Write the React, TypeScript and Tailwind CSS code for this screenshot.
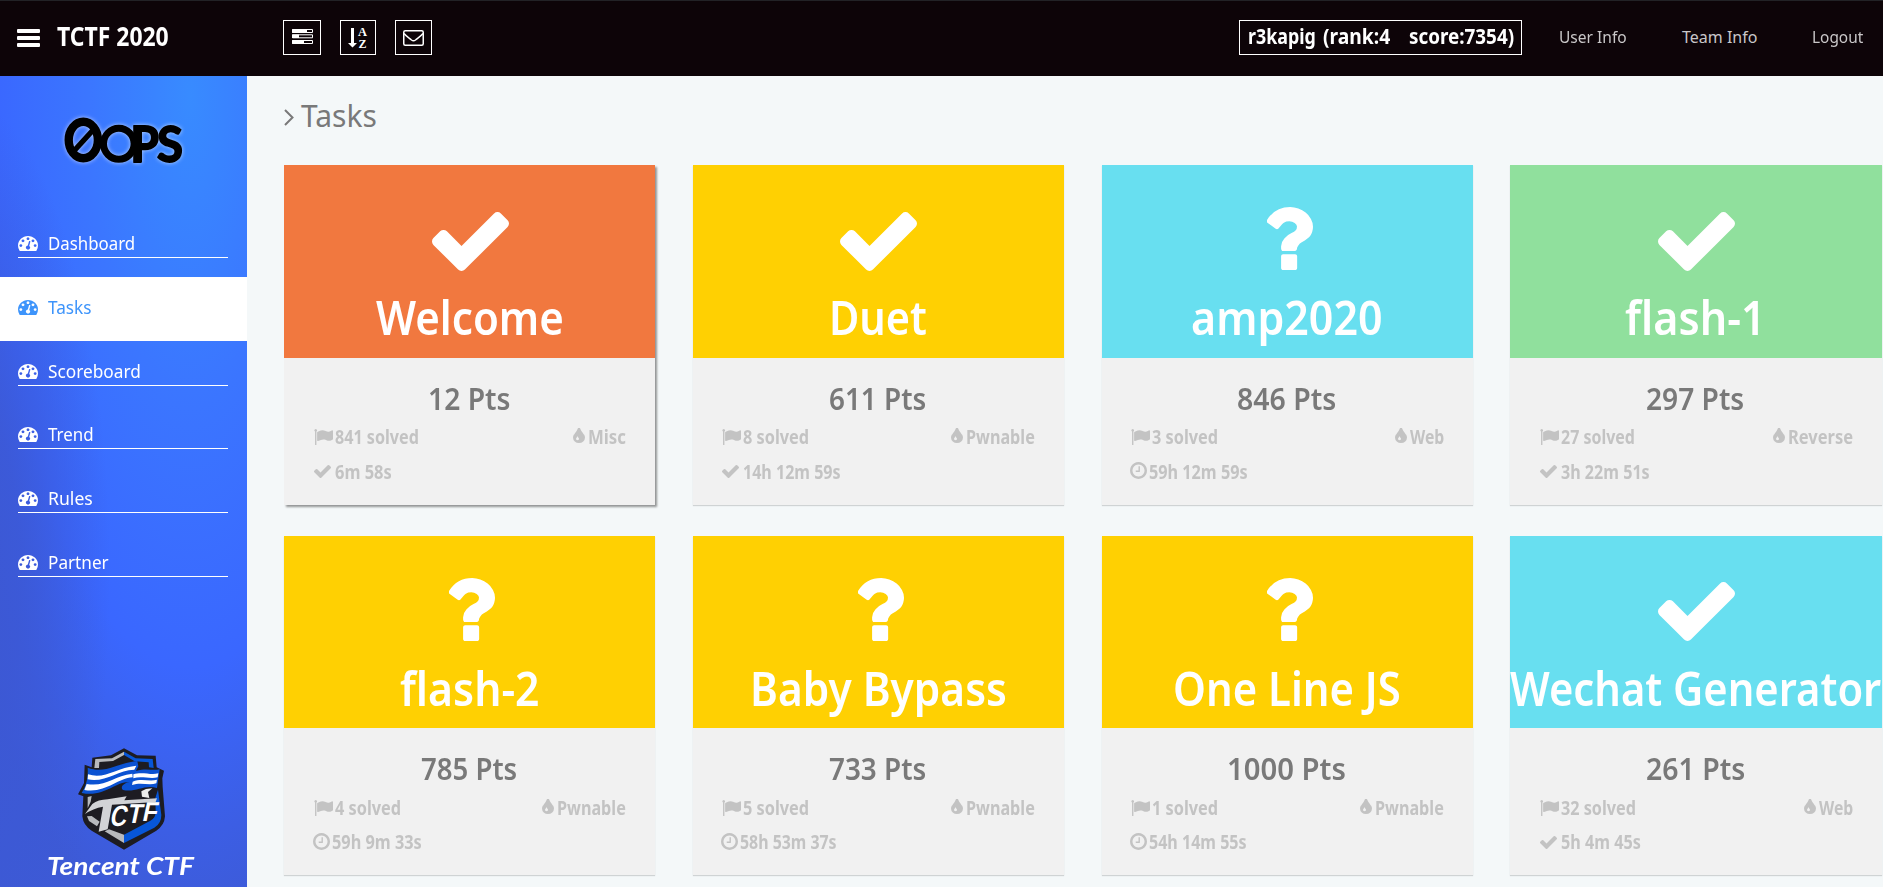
import { useLayoutEffect, useRef, useState } from "react";
import type { ReactNode } from "react";

/** Text set to a fixed width, condensed or widened horizontally as needed. */
function Fit({ w, className = "", children }: { w: number; className?: string; children: ReactNode }) {
  const ref = useRef<HTMLSpanElement>(null);
  const [scale, setScale] = useState(1);
  useLayoutEffect(() => {
    if (ref.current) setScale(w / ref.current.offsetWidth);
  }, [w]);
  return (
    <span className={`block shrink-0 ${className}`} style={{ width: w }}>
      <span ref={ref} className="inline-block origin-left whitespace-pre" style={{ transform: `scaleX(${scale})` }}>
        {children}
      </span>
    </span>
  );
}

function Icon({ d, className = "", box = "0 0 1792 1792" }: { d: string; className?: string; box?: string }) {
  return (
    <svg viewBox={box} fill="currentColor" preserveAspectRatio="none" className={`block shrink-0 ${className}`}>
      <path d={d} />
    </svg>
  );
}

const CHECK =
  "M1671 566q0 40-28 68l-724 724-136 136q-28 28-68 28t-68-28l-136-136-362-362q-28-28-28-68t28-68l136-136q28-28 68-28t68 28l294 295 656-657q28-28 68-28t68 28l136 136q28 28 28 68z";
const QUESTION =
  "M1088 1256v240q0 16-12 28t-28 12h-240q-16 0-28-12t-12-28v-240q0-16 12-28t28-12h240q16 0 28 12t12 28zm316-600q0 54-15.5 101t-35 76.5-55 59.5-57.5 43.5-61 35.5q-41 23-68.5 65t-27.5 67q0 17-12 32.5t-28 15.5h-240q-15 0-25.5-18.5t-10.5-37.5v-45q0-83 65-156.5t143-108.5q59-27 84-56t25-76q0-42-46.5-74t-107.5-32q-65 0-108 29-35 25-107 115-13 16-31 16-12 0-25-8l-164-125q-13-10-15.5-25t5.5-28q160-266 464-266 80 0 161 31t146 83 106 127.5 41 158.5z";
const TINT =
  "M896 1152q0-36-20-69-1-1-15.5-22.5t-25.5-38-25-44-21-50.5q-4-16-21-16t-21 16q-7 23-21 50.5t-25 44-25.5 38-15.5 22.5q-20 33-20 69 0 53 37.5 90.5t90.5 37.5 90.5-37.5 37.5-90.5zm512-128q0 212-150 362t-362 150-362-150-150-362q0-145 81-275 6-9 62.5-90.5t101-151 99.5-178 83-201.5q9-30 34-47t51-17 51.5 17 33.5 47q28 93 83 201.5t99.5 178 101 151 62.5 90.5q81 127 81 275z";
const CLOCK =
  "M1024 544v448q0 14-9 23t-23 9h-320q-14 0-23-9t-9-23v-64q0-14 9-23t23-9h224v-352q0-14 9-23t23-9h64q14 0 23 9t9 23zm416 352q0-148-73-273t-198-198-273-73-273 73-198 198-73 273 73 273 198 198 273 73 273-73 198-198 73-273zm224 0q0 209-103 385.5t-279.5 279.5-385.5 103-385.5-103-279.5-279.5-103-385.5 103-385.5 279.5-279.5 385.5-103 385.5 103 279.5 279.5 103 385.5z";
const FLAG =
  "M320 256q0 72-64 110v1266q0 13-9.5 22.5t-22.5 9.5h-64q-13 0-22.5-9.5t-9.5-22.5v-1266q-64-38-64-110 0-53 37.5-90.5t90.5-37.5 90.5 37.5 37.5 90.5zm1472 64v763q0 25-12.5 38.5t-39.5 27.5q-215 116-369 116-61 0-123.5-22t-108.5-48-115.5-48-142.5-22q-192 0-464 146-17 9-33 9-26 0-45-19t-19-45v-742q0-32 31-55 21-14 79-43 236-120 421-120 107 0 200 29t219 88q38 19 88 19 54 0 117.5-21t110-47 88-47 54.5-21q26 0 45 19t19 45z";
const DOT = "q0-53-37.5-90.5t-90.5-37.5-90.5 37.5-37.5 90.5 37.5 90.5 90.5 37.5 90.5-37.5 37.5-90.5z";
const GAUGE = `M384 1152${DOT}m192-448${DOT}m428 481l101-382q6-26-7.5-48.5t-38.5-29.5-48 6.5-30 39.5l-101 382q-60 5-107 43.5t-63 98.5q-20 77 20 146t117 89 146-20 89-117q16-60-6-117t-72-91zm660-33${DOT}m-640-640${DOT}m448 192${DOT}m320 448q0 261-141 483-19 29-54 29h-1402q-35 0-54-29-141-221-141-483 0-182 71-348t191-286 286-191 348-71 348 71 286 191 191 286 71 348z`;

type Task = {
  name: string;
  nameW: number;
  color: string;
  done: boolean;
  pts: string;
  ptsW: number;
  solved: string;
  solvedW: number;
  cat: string;
  catW: number;
  time: string;
  timeW: number;
  raised?: boolean;
};

const YELLOW = "bg-[#ffd002]";
const CYAN = "bg-[#68dff0]";

const tasks: Task[] = [
  { name: "Welcome", nameW: 188, color: "bg-[#f1783f]", done: true, pts: "12 Pts", ptsW: 82, solved: "841 solved", solvedW: 84, cat: "Misc", catW: 38, time: "6m 58s", timeW: 57, raised: true },
  { name: "Duet", nameW: 98, color: YELLOW, done: true, pts: "611 Pts", ptsW: 97, solved: "8 solved", solvedW: 66, cat: "Pwnable", catW: 69, time: "14h 12m 59s", timeW: 98 },
  { name: "amp2020", nameW: 192, color: CYAN, done: false, pts: "846 Pts", ptsW: 99, solved: "3 solved", solvedW: 66, cat: "Web", catW: 34, time: "59h 12m 59s", timeW: 99 },
  { name: "flash-1", nameW: 141, color: "bg-[#90e09d]", done: true, pts: "297 Pts", ptsW: 98, solved: "27 solved", solvedW: 74, cat: "Reverse", catW: 65, time: "3h 22m 51s", timeW: 89 },
  { name: "flash-2", nameW: 140, color: YELLOW, done: false, pts: "785 Pts", ptsW: 96, solved: "4 solved", solvedW: 66, cat: "Pwnable", catW: 69, time: "59h 9m 33s", timeW: 90 },
  { name: "Baby Bypass", nameW: 257, color: YELLOW, done: false, pts: "733 Pts", ptsW: 97, solved: "5 solved", solvedW: 66, cat: "Pwnable", catW: 69, time: "58h 53m 37s", timeW: 97 },
  { name: "One Line JS", nameW: 228, color: YELLOW, done: false, pts: "1000 Pts", ptsW: 119, solved: "1 solved", solvedW: 66, cat: "Pwnable", catW: 69, time: "54h 14m 55s", timeW: 98 },
  { name: "Wechat Generator", nameW: 371, color: CYAN, done: true, pts: "261 Pts", ptsW: 99, solved: "32 solved", solvedW: 75, cat: "Web", catW: 34, time: "5h 4m 45s", timeW: 80 },
];

function Card({ t }: { t: Task }) {
  return (
    <article
      className={`h-[339.5px] w-[371.25px] shrink-0 bg-[#f1f1f1] ${
        t.raised ? "shadow-[2px_2px_2px_rgba(0,0,0,0.4)]" : "shadow-[0_1px_1px_rgba(0,0,0,0.15)]"
      }`}
    >
      <div className={`flex h-[192.5px] flex-col items-center text-white ${t.color}`}>
        <div className="flex h-[117px] w-full items-end justify-center">
          {t.done ? (
            <Icon d={CHECK} box="121 334 1550 1188" className="mb-[11.5px] ml-[1px] h-[59px] w-[77px]" />
          ) : (
            <Icon d={QUESTION} box="487 256 917 1280" className="mb-[12px] ml-[5px] h-[63px] w-[46px]" />
          )}
        </div>
        <Fit w={t.nameW} className="pt-[3px] text-[47px] leading-[64px] font-semibold">
          {t.name}
        </Fit>
      </div>
      <div className="flex h-[147px] flex-col pt-[19px] pr-[29px] pl-[29.5px]">
        <Fit w={t.ptsW} className="-ml-[2px] self-center text-[31px] leading-[42px] font-semibold text-[#797979]">
          {t.pts}
        </Fit>
        <div className="mt-[1px] flex h-[35px] items-center justify-between text-[19px] leading-[26px] font-bold text-[#c3c3c3]">
          <div className="flex items-center">
            <Icon d={FLAG} box="32 128 1760 1536" className="mr-[2px] h-[16px] w-[19px]" />
            <Fit w={t.solvedW}>{t.solved}</Fit>
          </div>
          <div className="flex items-center">
            <Icon d={TINT} box="384 128 1024 1408" className="mr-[3px] mb-[3px] h-[15px] w-[12px]" />
            <Fit w={t.catW}>{t.cat}</Fit>
          </div>
        </div>
        <div className="flex h-[34px] items-center text-[19px] leading-[26px] font-bold text-[#c3c3c3]">
          {t.done ? (
            <Icon d={CHECK} box="121 334 1550 1188" className="mr-[4px] h-[13px] w-[17px]" />
          ) : (
            <Icon d={CLOCK} box="128 128 1536 1536" className="mr-[2px] mb-[2px] -ml-px h-[17px] w-[17px]" />
          )}
          <Fit w={t.timeW}>{t.time}</Fit>
        </div>
      </div>
    </article>
  );
}

const nav = [
  { label: "Dashboard", w: 87 },
  { label: "Tasks", w: 44, active: true },
  { label: "Scoreboard", w: 93 },
  { label: "Trend", w: 46 },
  { label: "Rules", w: 45 },
  { label: "Partner", w: 61 },
];

function OopsLogo() {
  return (
    <svg viewBox="56 108 136 64" className="block h-[64px] w-[136px] overflow-visible drop-shadow-[0_0_2px_rgba(255,255,255,0.65)]">
      <ellipse cx="83.3" cy="140" rx="14.6" ry="18.3" fill="none" stroke="#000" strokeWidth="8.4" />
      <path d="M73 152 L94 129" stroke="#000" strokeWidth="5.4" />
      <ellipse cx="118.8" cy="143.8" rx="15.3" ry="15.5" fill="none" stroke="#000" strokeWidth="7" />
      <rect x="133.5" y="125.500" width="8.500" height="37" />
      <g fill="#000" stroke="#000" strokeWidth="1.800" fontFamily="Lato, sans-serif" fontWeight="700" fontSize="50">
        <text x="130.5" y="161.700" textLength="28.500" lengthAdjust="spacingAndGlyphs">P</text>
        <text x="157" y="161.700" textLength="26" lengthAdjust="spacingAndGlyphs">S</text>
      </g>
    </svg>
  );
}

function Shield() {
  return (
    <svg viewBox="230 145 264 306" className="block h-[102px] w-[88px] overflow-visible">
      <path d="M371 146 L410 167 L466 168 L469 203 L491 213 L486 236 L487 262 L494 350 Q492 378 468 393 L371 450 L274 393 Q249 378 246 350 L249 290 L233 284 L251 250 L253 195 L274 203 L276 174 L332 167 Z" fill="#1d1c22" />
      <path d="M371 156 L371 166 L338 184 L297 187 L296 205 L282 205 L285 178 L335 176 Z" fill="#b8babd" />
      <path d="M371 156 L406 176 L457 178 L460 205 L446 203 L445 188 L403 185 L371 166 Z" fill="#0756d8" />
      <path d="M473 270 L483 346 Q483 372 462 384 L371 430 L371 405 L450 363 Q467 355 466 334 L465 295 Z" fill="#0756d8" />
      <path d="M262 292 L274 289 L271 306 L262 326 Z M260 350 L274 349 L298 366 L290 380 L266 364 Z M326 389 L371 405 L371 430 L313 395 Z" fill="#b8babd" />
      <path d="M262 204 C315 224 350 190 411 184 L414 200 L407 214 C440 204 454 214 478 209 L470 265 C430 253 407 280 368 271 C358 262 370 250 388 247 C345 245 312 294 244 280 C257 260 264 235 262 204 Z" fill="#0b52d2" />
      <path d="M263 224 C315 240 345 204 408 198 L402 210 C350 212 314 250 262 239 Z" fill="#fff" />
      <path d="M259 253 C315 263 340 229 396 222 L397 233 C350 236 315 282 252 271 Z" fill="#fff" />
      <path d="M399 224 C425 215 450 227 474 221 L472 233 C449 239 423 228 399 236 Z" fill="#fff" />
      <path d="M397 246 C424 235 447 247 470 240 L468 251 C446 258 421 247 395 256 Z" fill="#fff" />
      <path d="M254 343 L276 313 Q293 300 322 299 L379 290 L372 302 L470 296 L466 307 L335 315 L322 389 L295 396 L308 321 Q278 326 254 343 Z" fill="#d2d3d6" />
      <path d="M425 291 L423 275 L437 268 L456 266 L443 277 L447 295 Z" fill="#eceded" />
      <g transform="skewX(-12)" fontFamily="Liberation Sans, sans-serif" fontWeight="700" fill="#fff">
        <text x="407" y="380" fontSize="88" textLength="50" lengthAdjust="spacingAndGlyphs">C</text>
        <text x="457" y="370" fontSize="82" textLength="44" lengthAdjust="spacingAndGlyphs">T</text>
        <text x="501" y="363" fontSize="82" textLength="44" lengthAdjust="spacingAndGlyphs">F</text>
      </g>
    </svg>
  );
}

export default function App() {
  return (
    <div className="flex h-[887px] w-full flex-col overflow-hidden bg-[#f4f8f9] font-['Noto_Sans','Open_Sans',sans-serif]">
      <header className="flex h-[76px] shrink-0 items-start border-t border-[#222226] bg-[#0d0408] text-white">
        <div className="flex w-[283px] items-center pt-[17px] pl-[17px]">
          <svg viewBox="0 0 23 18" className="mt-[3px] mr-[17px] block h-[18px] w-[23px]" fill="#fff">
            <rect width="23" height="4" rx="1" />
            <rect y="7" width="23" height="4" rx="1" />
            <rect y="14" width="23" height="4" rx="1" />
          </svg>
          <Fit w={112} className="text-[26px] leading-[36px] font-bold">TCTF 2020</Fit>
        </div>
        <div className="flex pt-[19px]">
          <div className="mr-[19px] flex h-[35px] w-[38px] items-center justify-center border border-white pb-[2px]">
            <svg viewBox="0 0 21 15" className="block h-[15px] w-[21px]" fill="none" stroke="#fff">
              <path d="M.5 .5h20v3h-20z M.5 5.8h20v3h-20z M.5 11.5h20v3h-20z" />
              <path d="M0 2h15M0 7.3h7M0 13h12" strokeWidth="3.4" />
            </svg>
          </div>
          <div className="mr-[19px] flex h-[35px] w-[36px] items-center justify-center border border-white">
            <svg viewBox="0 0 20 20" className="block h-[20px] w-[20px] overflow-visible" fill="#fff">
              <path d="M3 0h3v15h3l-4.5 4.500L0 15h3z" />
              <g fontFamily="Liberation Serif, serif" fontWeight="700" fontSize="11.500">
                <text x="10" y="8" textLength="9" lengthAdjust="spacingAndGlyphs">A</text>
                <text x="10.500" y="19.500" textLength="8" lengthAdjust="spacingAndGlyphs">Z</text>
              </g>
            </svg>
          </div>
          <div className="flex h-[35px] w-[37px] items-center justify-center border border-white">
            <svg viewBox="0 0 21 16" className="block h-[16px] w-[21px]" fill="none" stroke="#fff" strokeWidth="1.500">
              <rect x=".75" y=".75" width="19.500" height="14.500" rx="1.500" />
              <path d="M1 3.500C3 6 6 8 8.500 10q2 1.500 4 0C15 8 18 6 20 3.500" />
            </svg>
          </div>
        </div>
        <div className="ml-auto flex pt-[19px]">
          <div className="mr-[37px] flex h-[35px] w-[283px] items-center border border-white pb-[2px] pl-[8px] text-[21px] font-bold">
            <Fit w={68} className="mr-[7px]">r3kapig</Fit>
            <Fit w={67} className="mr-[19px]">(rank:4</Fit>
            <Fit w={105}>score:7354)</Fit>
          </div>
          <nav className="flex h-[35px] items-center pr-[20px] pb-[1px] text-[16px] text-[#c9c7c8]">
            <Fit w={68} className="mr-[55px]">User Info</Fit>
            <Fit w={75} className="mr-[55px]">Team Info</Fit>
            <Fit w={51}>Logout</Fit>
          </nav>
        </div>
      </header>

      <div className="flex min-h-0 flex-1">
        <aside className="flex w-[247px] shrink-0 flex-col bg-[radial-gradient(ellipse_150px_480px_at_-40px_500px,rgba(60,88,210,0.95)_0%,rgba(60,88,212,0.85)_40%,rgba(60,90,216,0)_100%),radial-gradient(ellipse_290px_840px_at_190px_20px,#388bff_0%,#3b76ff_35%,#3a67ff_68%,#3c5ee4_88%,#3d5ad6_100%)]">
          <div className="flex h-[137px] pt-[32px] pl-[56px]">
            <OopsLogo />
          </div>
          <ul className="flex flex-col">
            {nav.map((n) => (
              <li key={n.label} className={`h-[63.8px] pl-[18px] ${n.active ? "bg-white text-[#3d94fb]" : "text-white"}`}>
                <div className={`flex h-[45px] w-[210px] items-end border-b pb-[1px] ${n.active ? "border-transparent" : "border-white"}`}>
                  <Icon d={GAUGE} box="0 256 1792 1408" className="mr-[10px] mb-[5px] h-[15px] w-[20px]" />
                  <Fit w={n.w} className="text-[18px] leading-[26px]">{n.label}</Fit>
                </div>
              </li>
            ))}
          </ul>
          <div className="mt-auto flex flex-col pb-[7px] pl-[47px]">
            <div className="pl-[30px]">
              <Shield />
            </div>
            <Fit w={147} className="font-['Lato',sans-serif] text-[25px] leading-[30px] font-bold text-white italic">Tencent CTF</Fit>
          </div>
        </aside>

        <main className="min-w-0 flex-1 pl-[37px]">
          <h1 className="flex h-[89px] items-start pt-[19px] text-[#797979]">
            <svg viewBox="0 0 10 17" className="mt-[14px] mr-[7px] block h-[17px] w-[10px]" fill="none" stroke="currentColor" strokeWidth="2">
              <path d="M1 1l7.500 7.500L1 16" />
            </svg>
            <Fit w={76} className="text-[30px] leading-[41px] font-normal">Tasks</Fit>
          </h1>
          <div className="grid grid-cols-[repeat(4,371.25px)] gap-x-[37.5px] gap-y-[31px]">
            {tasks.map((t) => (
              <Card key={t.name} t={t} />
            ))}
          </div>
        </main>
      </div>
    </div>
  );
}
